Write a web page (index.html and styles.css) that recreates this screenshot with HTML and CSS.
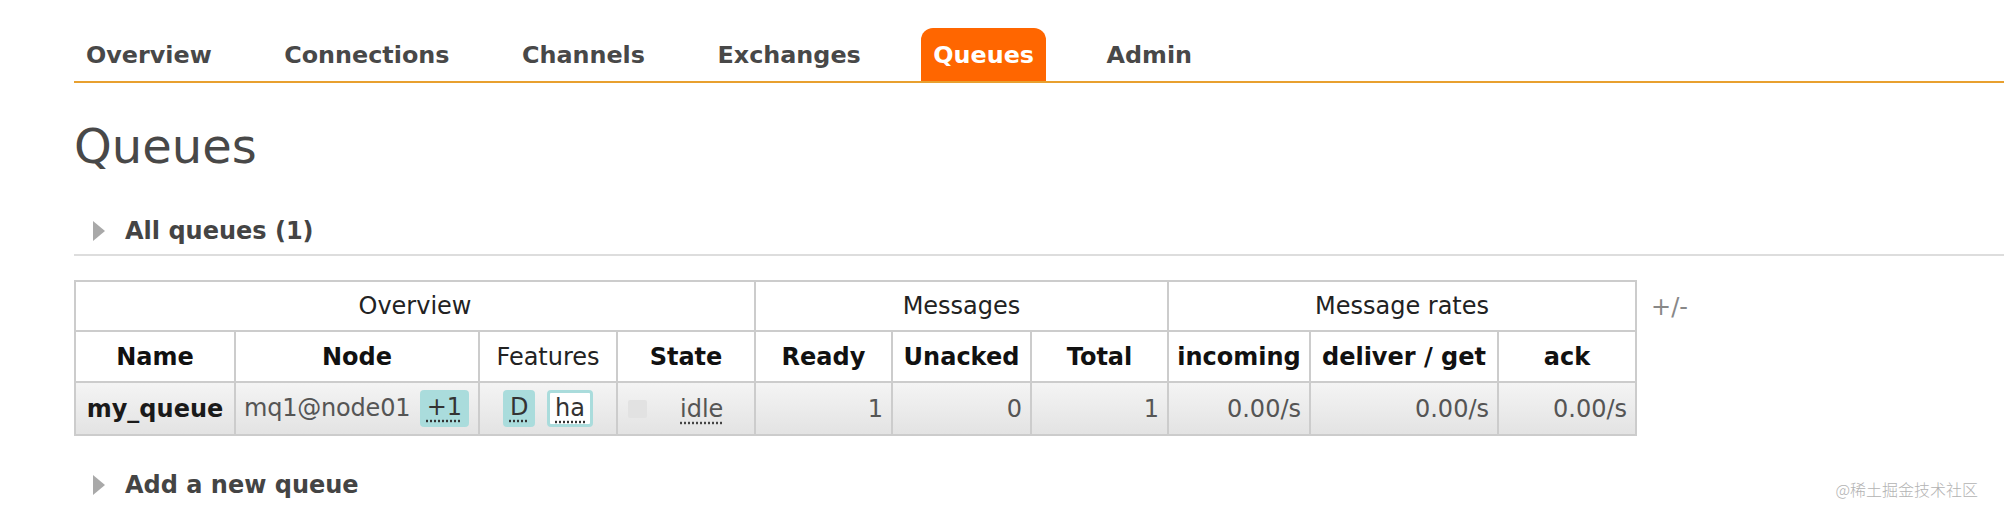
FILE: index.html
```html
<!DOCTYPE html>
<html lang="en">
<head>
<meta charset="utf-8">
<title>Queues</title>
<link rel="stylesheet" href="styles.css">
</head>
<body>
<div class="page">
  <nav class="menu">
    <ul class="menu-list">
      <li class="menu-item">Overview</li>
      <li class="menu-item">Connections</li>
      <li class="menu-item">Channels</li>
      <li class="menu-item">Exchanges</li>
      <li class="menu-item selected">Queues</li>
      <li class="menu-item">Admin</li>
    </ul>
  </nav>

  <h1 class="title">Queues</h1>

  <section class="section">
    <h2 class="section-head"><span class="arrow"></span>All queues (1)</h2>
    <div class="table-row">
      <table class="list">
        <colgroup>
          <col class="c-name"><col class="c-node"><col class="c-feat"><col class="c-state">
          <col class="c-ready"><col class="c-unacked"><col class="c-total">
          <col class="c-in"><col class="c-deliver"><col class="c-ack">
        </colgroup>
        <thead>
          <tr class="grp">
            <th colspan="4">Overview</th>
            <th colspan="3">Messages</th>
            <th colspan="3">Message rates</th>
          </tr>
          <tr class="cols">
            <th>Name</th>
            <th>Node</th>
            <th class="plain">Features</th>
            <th>State</th>
            <th>Ready</th>
            <th>Unacked</th>
            <th>Total</th>
            <th>incoming</th>
            <th>deliver / get</th>
            <th>ack</th>
          </tr>
        </thead>
        <tbody>
          <tr class="data">
            <td class="name">my_queue</td>
            <td class="node">mq1@node01 <abbr class="badge">+1</abbr></td>
            <td class="feat"><abbr class="badge">D</abbr> <abbr class="badge outline">ha</abbr></td>
            <td class="state"><span class="state-box"></span><abbr class="dotted">idle</abbr></td>
            <td class="num">1</td>
            <td class="num">0</td>
            <td class="num">1</td>
            <td class="num">0.00/s</td>
            <td class="num">0.00/s</td>
            <td class="num">0.00/s</td>
          </tr>
        </tbody>
      </table>
      <span class="plusminus">+/-</span>
    </div>
  </section>

  <section class="section">
    <h2 class="section-head last"><span class="arrow"></span>Add a new queue</h2>
  </section>

  <div class="watermark">@稀土掘金技术社区</div>
</div>
</body>
</html>
```

FILE: styles.css
```css
html, body {
  margin: 0;
  padding: 0;
  background: #fff;
}

body {
  font-family: "DejaVu Sans", Verdana, sans-serif;
  color: #484848;
  font-size: 24px;
}

.page {
  position: relative;
  height: 507px;
  padding-left: 74px;
  overflow: hidden;
}

/* ---------- menu ---------- */
.menu-list {
  list-style: none;
  margin: 0;
  padding: 28px 0 0 0;
  display: flex;
  gap: 48.5px;
  border-bottom: 2px solid #e8a02f;
}

.menu-item {
  font-weight: bold;
  font-size: 23.85px;
  line-height: 55px;
  height: 53px;
  padding: 0 12px;
  color: #484848;
  border-radius: 12px 12px 0 0;
}

.menu-item.selected {
  background: #ff6600;
  color: #fff;
}

/* ---------- title ---------- */
.title {
  margin: 35px 0 0 0;
  font-size: 48px;
  line-height: 56px;
  font-weight: normal;
  color: #484848;
}

/* ---------- sections ---------- */
.section-head {
  margin: 40px 0 0 0;
  font-size: 24px;
  line-height: 34px;
  font-weight: bold;
  color: #444;
  padding-bottom: 6px;
  border-bottom: 2px solid #ddd;
  display: flex;
  align-items: center;
}

.section-head.last {
  margin-top: 32px;
  border-bottom: 0;
}

.arrow {
  display: inline-block;
  width: 0;
  height: 0;
  margin: 0 20px 0 19px;
  border-left: 12px solid #a9a9a9;
  border-top: 10.5px solid transparent;
  border-bottom: 10.5px solid transparent;
}

.table-row {
  display: flex;
  align-items: flex-start;
  margin-top: 24px;
}

/* ---------- table ---------- */
.list {
  border-collapse: collapse;
  table-layout: fixed;
  width: 1561px;
  border: 2px solid #ccc;
}

.c-name { width: 160px; }
.c-node { width: 244px; }
.c-feat { width: 138px; }
.c-state { width: 138px; }
.c-ready { width: 137px; }
.c-unacked { width: 139px; }
.c-total { width: 137px; }
.c-in { width: 142px; }
.c-deliver { width: 188px; }
.c-ack { width: 138px; }

.list th,
.list td {
  border: 2px solid #ccc;
  padding: 0 8px;
  white-space: nowrap;
  overflow: hidden;
}

.list th {
  color: #111;
  text-align: center;
}

.grp th {
  font-weight: normal;
  height: 48px;
  color: #222;
}

.cols th {
  font-weight: bold;
  height: 49px;
}

.cols th.plain {
  font-weight: normal;
  color: #222;
}

.data td {
  height: 51px;
  background: linear-gradient(#f4f4f4, #e3e3e3);
  color: #555;
}

.data td.name {
  font-weight: bold;
  color: #1a1a1a;
  text-align: center;
}

.data td.node {
  padding-left: 8px;
  letter-spacing: -0.2px;
}

.data td.feat {
  text-align: center;
}

.data td.num {
  text-align: right;
  padding-right: 8px;
}

.badge {
  display: inline-block;
  box-sizing: border-box;
  height: 37px;
  line-height: 35px;
  padding: 0 7px;
  margin-left: 2px;
  background: #aadcdc;
  color: #333;
  border-radius: 4px;
  text-decoration: underline dotted #333;
  text-underline-offset: 5px;
  vertical-align: middle;
  letter-spacing: 0;
}

.feat .badge {
  margin: 0 2px;
}

.badge.outline {
  background: #fff;
  border: 3px solid #aadcdc;
  line-height: 31px;
  padding: 0 5px;
}

.data td.state {
  padding-left: 10px;
  text-align: left;
}

.state-box {
  display: inline-block;
  width: 19px;
  height: 18px;
  background: #e2e2e2;
  vertical-align: middle;
  margin-right: 33px;
  border-radius: 2px;
}

.dotted {
  text-decoration: underline dotted #444;
  text-underline-offset: 5px;
  color: #555;
  vertical-align: middle;
}

.plusminus {
  margin: 13px 0 0 14px;
  font-size: 24px;
  color: #888;
}

/* ---------- watermark ---------- */
.watermark {
  position: absolute;
  right: 26px;
  bottom: 6px;
  font-family: "Noto Sans CJK SC", sans-serif;
  font-size: 16px;
  font-weight: 300;
  color: #b3b3b3;
}
```
